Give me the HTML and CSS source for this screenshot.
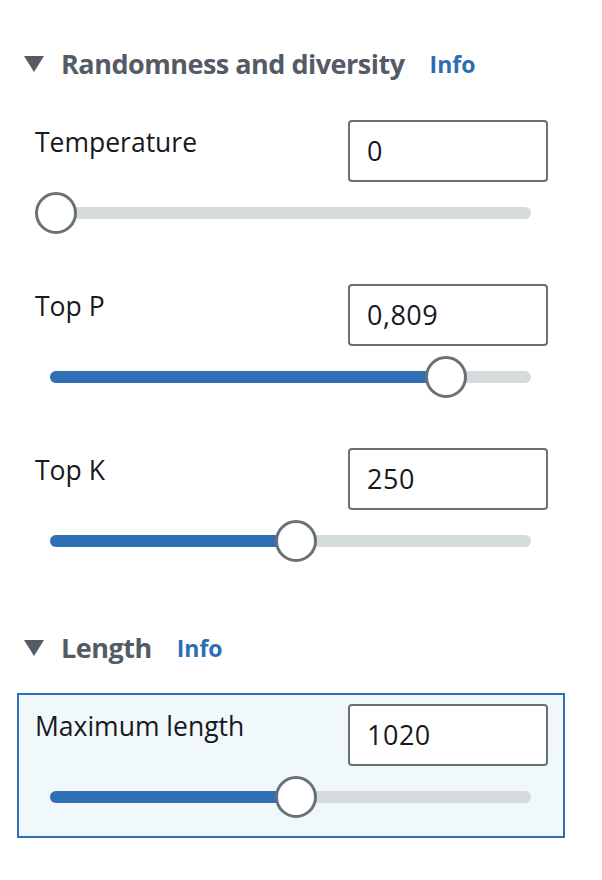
FILE: index.html
```html
<!DOCTYPE html>
<html>
<head>
<meta charset="utf-8">
<link rel="stylesheet" href="styles.css">
</head>
<body>
<div class="panel">
  <section class="section">
    <div class="section-head">
      <span class="caret"></span>
      <h2 class="section-title">Randomness and diversity</h2>
      <a class="info">Info</a>
    </div>
    <div class="fields">
      <div class="field">
        <div class="field-row">
          <span class="field-label">Temperature</span>
          <div class="num-input">0</div>
        </div>
        <div class="slider">
          <div class="track"><div class="fill" style="width:0px"></div></div>
          <div class="thumb" style="left:0px"></div>
        </div>
      </div>
      <div class="field">
        <div class="field-row">
          <span class="field-label">Top P</span>
          <div class="num-input">0,809</div>
        </div>
        <div class="slider">
          <div class="track"><div class="fill" style="width:396px"></div></div>
          <div class="thumb" style="left:390px"></div>
        </div>
      </div>
      <div class="field">
        <div class="field-row">
          <span class="field-label">Top K</span>
          <div class="num-input">250</div>
        </div>
        <div class="slider">
          <div class="track"><div class="fill" style="width:246px"></div></div>
          <div class="thumb" style="left:240px"></div>
        </div>
      </div>
    </div>
  </section>
  <section class="section">
    <div class="section-head">
      <span class="caret"></span>
      <h2 class="section-title">Length</h2>
      <a class="info">Info</a>
    </div>
    <div class="fields">
      <div class="field field-active">
        <div class="field-row">
          <span class="field-label">Maximum length</span>
          <div class="num-input">1020</div>
        </div>
        <div class="slider">
          <div class="track"><div class="fill" style="width:246px"></div></div>
          <div class="thumb" style="left:240px"></div>
        </div>
      </div>
    </div>
  </section>
</div>
</body>
</html>
```
FILE: styles.css
```css
* { box-sizing: border-box; }
body {
  margin: 0;
  background: #ffffff;
  font-family: "Open Sans", "Lato", sans-serif;
  color: #16191f;
}
.panel {
  padding: 49px 37px 0 17px;
}
.section + .section {
  margin-top: 51px;
}
.section-head {
  display: flex;
  align-items: center;
  height: 30px;
  padding-left: 7px;
}
.caret {
  width: 0;
  height: 0;
  border-left: 10px solid transparent;
  border-right: 10px solid transparent;
  border-top: 16px solid #545b64;
  margin-right: 17px;
}
.section-title {
  margin: 0;
  font-size: 27px;
  font-weight: 700;
  color: #545b64;
  line-height: 30px;
  letter-spacing: -0.5px;
}
.info {
  margin-left: 25px;
  font-size: 23px;
  font-weight: 700;
  color: #2e6db4;
  line-height: 30px;
}
.fields {
  margin-top: 30px;
  display: flex;
  flex-direction: column;
  gap: 19px;
}
.field {
  border: 2px solid transparent;
  padding: 9px 15px 18px 16px;
}
.field-active {
  border-color: #2f6fb5;
  background: #f1f8fc;
}
.field-row {
  display: flex;
  justify-content: space-between;
  align-items: flex-start;
}
.field-label {
  font-size: 26.5px;
  line-height: 30px;
  padding-top: 7px;
}
.num-input {
  width: 200px;
  height: 62px;
  border: 2px solid #687078;
  border-radius: 4px;
  background: #ffffff;
  padding: 0 17px;
  font-size: 27px;
  letter-spacing: 0.5px;
  line-height: 58px;
  color: #16191f;
}
.slider {
  position: relative;
  margin-top: 10px;
  height: 42px;
}
.track {
  position: absolute;
  left: 15px;
  right: 17px;
  top: 15px;
  height: 12px;
  border-radius: 6px;
  background: #d5dbdb;
  overflow: hidden;
}
.fill {
  height: 100%;
  background: #2f6fb5;
}
.thumb {
  position: absolute;
  top: 0;
  width: 42px;
  height: 42px;
  border-radius: 50%;
  border: 3px solid #687078;
  background: #ffffff;
}
```
